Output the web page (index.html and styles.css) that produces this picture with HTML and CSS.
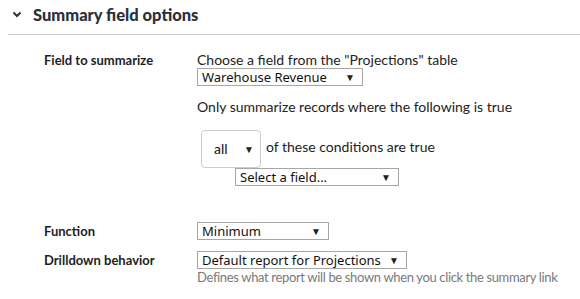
FILE: index.html
```html
<!DOCTYPE html>
<html lang="en">

<head>
  <title>Summary field options</title>
  <meta charset="utf-8">
  <meta name="viewport" content="width=device-width, initial-scale=1">
  <link rel="stylesheet" href="styles.css">
</head>

<body>
  <!-- Section header -->
  <div class="section-header">
    <svg class="chevron" width="10" height="7" viewBox="0 0 10 7">
      <path d="M1.5 1.5 L5 5 L8.5 1.5" fill="none" stroke="#333" stroke-width="2" />
    </svg>
    <h2>Summary field options</h2>
  </div>

  <div class="section-body">
    <!-- Field to summarize -->
    <div class="row">
      <div class="label">Field to summarize</div>
      <div class="field">
        <div class="text">Choose a field from the "Projections" table</div>
        <div class="picker w-field">
          <span>Warehouse Revenue</span>
          <span class="arrow">&#9660;</span>
        </div>
        <div class="text spaced">Only summarize records where the following is true</div>
        <div class="conditions">
          <div class="picker big">
            <span>all</span>
            <span class="arrow">&#9660;</span>
          </div>
          <span class="text raised">of these conditions are true</span>
        </div>
        <div class="picker w-select indent">
          <span>Select a field...</span>
          <span class="arrow">&#9660;</span>
        </div>
      </div>
    </div>

    <!-- Function -->
    <div class="row function-row">
      <div class="label">Function</div>
      <div class="field">
        <div class="picker w-func">
          <span>Minimum</span>
          <span class="arrow">&#9660;</span>
        </div>
      </div>
    </div>

    <!-- Drilldown -->
    <div class="row drill-row">
      <div class="label">Drilldown behavior</div>
      <div class="field">
        <div class="picker w-report">
          <span>Default report for Projections</span>
          <span class="arrow">&#9660;</span>
        </div>
        <div class="hint">Defines what report will be shown when you click the summary link</div>
      </div>
    </div>
  </div>
</body>

</html>
```

FILE: styles.css
```css
* {
  box-sizing: border-box;
}

body {
  margin: 0;
  font-family: Lato, "Noto Sans", sans-serif;
  color: #222;
  background-color: #ffffff;
}

/* Header with chevron and divider */
.section-header {
  display: flex;
  align-items: center;
  height: 35px;
  margin-left: 8px;
  padding-left: 4px;
  padding-bottom: 5px;
  border-bottom: 1px solid #cccccc;
}

.chevron {
  margin-right: 11px;
}

.section-header h2 {
  margin: 0;
  font-size: 16.5px;
  font-weight: 900;
  color: #2b2f3a;
}

/* Form rows */
.section-body {
  padding-left: 44px;
  padding-top: 16px;
}

.row {
  display: grid;
  grid-template-columns: 153px 1fr;
}

.label {
  font-size: 13px;
  font-weight: 700;
  color: #1e1e1e;
  padding-top: 1px;
}

.text {
  font-size: 14px;
  color: #222;
}

.spaced {
  margin-top: 12px;
}

.conditions {
  display: flex;
  align-items: center;
  gap: 5px;
  margin-top: 15px;
}

.raised {
  margin-bottom: 5px;
}

/* Fake select boxes */
.picker {
  display: flex;
  justify-content: space-between;
  align-items: center;
  height: 18px;
  padding: 0 7px 0 4px;
  border: 1px solid #a6a6a6;
  font-family: "Noto Sans", sans-serif;
  font-size: 13px;
  color: #111;
  background-color: #fff;
}

.picker span {
  line-height: 16px;
}

.picker .arrow {
  font-size: 10px;
  color: #222;
}

.picker.big {
  width: 60px;
  height: 38px;
  margin-left: 4px;
  padding: 0 6px 0 12px;
  border-color: #cccccc;
  border-radius: 4px;
  font-family: Lato, sans-serif;
  font-size: 14px;
}

.w-field {
  width: 166px;
}

.w-select {
  width: 164px;
}

.w-func {
  width: 132px;
}

.w-report {
  width: 210px;
}

.indent {
  margin-left: 38px;
}

.function-row {
  margin-top: 36px;
}

.drill-row {
  margin-top: 11px;
}

.hint {
  font-family: Lato, sans-serif;
  font-size: 13px;
  letter-spacing: -0.35px;
  color: #7a7a7a;
  line-height: 16px;
}
```
